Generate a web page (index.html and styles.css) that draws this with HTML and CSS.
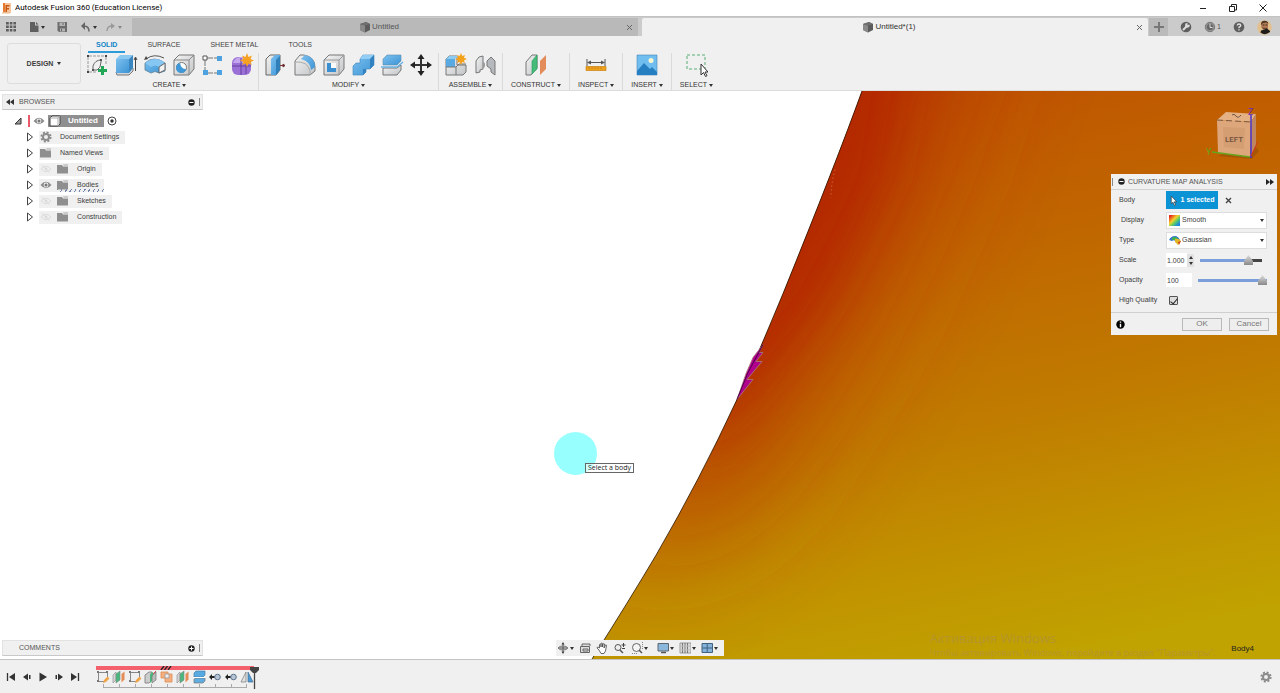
FILE: index.html
```html
<!DOCTYPE html>
<html lang="en">
<head>
<meta charset="utf-8">
<title>Autodesk Fusion 360 (Education License)</title>
<link rel="stylesheet" href="styles.css">
</head>
<body>
<svg class="defs" aria-hidden="true">
  <defs>
    <linearGradient id="blueFace" x1="0" y1="0" x2="1" y2="1"><stop offset="0" stop-color="#7cc0ee"/><stop offset="1" stop-color="#3d94d6"/></linearGradient>
    <linearGradient id="greyFace" x1="0" y1="0" x2="1" y2="1"><stop offset="0" stop-color="#f4f4f4"/><stop offset="1" stop-color="#c2c4c6"/></linearGradient>
    <symbol id="folder" viewBox="0 0 12 10"><path d="M0 1h5l1 1.500h5v7H0z" fill="#8f8f8f"/><path d="M6 0.500h5v1H6.600z" fill="#a8a8a8"/></symbol>
    <symbol id="eye" viewBox="0 0 12 8"><path d="M0.500 4Q6-2.500 11.500 4Q6 10.500 0.500 4z" fill="#8a8a8a"/><circle cx="6" cy="4" r="2.400" fill="#eee"/><circle cx="6" cy="4" r="1.500" fill="#777"/></symbol>
    <symbol id="eyeoff" viewBox="0 0 12 8"><path d="M1 4Q6-1.500 11 4Q6 9.500 1 4zM2 0.500l8 7" fill="none" stroke="#dcdcdc"/><circle cx="6" cy="4" r="1.500" fill="#dcdcdc"/></symbol>
    <symbol id="arrow" viewBox="0 0 8 10"><path d="M1.500 1l5 4-5 4z" fill="#fff" stroke="#444"/></symbol>
    <symbol id="gear" viewBox="0 0 12 12"><circle cx="6" cy="6" r="4.600" fill="none" stroke="#8c8c8c" stroke-width="2" stroke-dasharray="2 1.610"/><circle cx="6" cy="6" r="3" fill="none" stroke="#8c8c8c" stroke-width="2"/></symbol>
    <symbol id="cube" viewBox="0 0 12 12"><path d="M1 3l6-2 4 2v6l-5 2.500-5-2.500z" fill="#5c5c5c"/><path d="M1 3l5 1.500v7l-5-2.500z" fill="#8a8a8a"/><path d="M1 3l6-2 4 2-5 1.500z" fill="#707070"/></symbol>
    <symbol id="t-sketch" viewBox="0 0 14 14"><path d="M2.500 3v8M2 2.500h9.500M11.500 2v6M3 11.500h5" fill="none" stroke="#888"/><path d="M1 1h2v2H1zM10 1h2v2h-2zM1 10h2v2H1z" fill="#777"/><path d="M7 13l1-3 3.500-3.500 2 2L10 12z" fill="#f0a54a"/></symbol>
    <symbol id="t-plane" viewBox="0 0 14 14"><path d="M1 5l3-3v8l-3 3z" fill="#d5d5d5" stroke="#888" stroke-width=".6"/><path d="M4 4l4-3v9l-4 3z" fill="#49b87c" stroke="#888" stroke-width=".6"/><path d="M9.500 4l3-2.500v8l-3 3z" fill="#e58b55"/></symbol>
    <symbol id="t-plane2" viewBox="0 0 14 14"><path d="M1 5l4-3h3v8l-3 3H1z" fill="#ccc" stroke="#777" stroke-width=".8"/><path d="M6 4l3-2v8l-3 3z" fill="#49b87c"/><path d="M8 6l4-4v8l-4 3z" fill="#bbb" stroke="#777" stroke-width=".7"/><path d="M9 4l3-3" stroke="#d44"/></symbol>
    <symbol id="t-combine" viewBox="0 0 14 14"><path d="M1 2h7v2h4v8H5V8H1z" fill="#f4b080" stroke="#e08a4e" stroke-width=".8"/><path d="M5 4h4v4H5z" fill="#eee" stroke="#999" stroke-width=".8"/></symbol>
    <symbol id="t-split" viewBox="0 0 14 14"><path d="M2 3l2-2h9v4l-2 2H2z" fill="#57a9e2" stroke="#4a7fa5" stroke-width=".7"/><path d="M2 9l2-1h9v3l-2 2H2z" fill="#5fade0" stroke="#777" stroke-width=".7"/><path d="M1 7.500h12" stroke="#fff"/></symbol>
    <symbol id="t-move" viewBox="0 0 14 14"><path d="M1 7l3-3v6zM4 6h4v2H4z" fill="#222"/><circle cx="9.500" cy="7" r="2.800" fill="#b5c3d4" stroke="#5c738c"/></symbol>
    <symbol id="t-mirror" viewBox="0 0 14 14"><path d="M6 2v10H1z" fill="#e2e2e2" stroke="#777" stroke-width=".7"/><path d="M8 2v10h5z" fill="#4c9bd4" stroke="#466f93" stroke-width=".7"/></symbol>
  </defs>
</svg>

<header class="titlebar">
  <svg class="logo" viewBox="0 0 10 11"><path d="M1 0h8v10H1z" fill="#f7c49c"/><path d="M1 0h2v9H1z" fill="#e8792b"/><path d="M3.500 2h4v1.500H5V5h2v1.400H5V9H3.500z" fill="#c55612"/><path d="M0 10h8" stroke="#e9b58c"/></svg>
  <h1 class="title">Autodesk Fusion 360 (Education License)</h1>
  <div class="window-controls">
    <button aria-label="Minimize"><svg viewBox="0 0 10 10"><path d="M2 5.500h6" stroke="#222"/></svg></button>
    <button aria-label="Restore"><svg viewBox="0 0 10 10"><path d="M1.500 3.500h5v5h-5zM3.500 3V1.500h5V7H7" fill="none" stroke="#222"/></svg></button>
    <button aria-label="Close"><svg viewBox="0 0 10 10"><path d="M1.500 1.500l7 7M8.500 1.500l-7 7" stroke="#222"/></svg></button>
  </div>
</header>

<div class="tabbar">
  <div class="quick">
    <button aria-label="Data panel"><svg width="12" height="12" viewBox="0 0 12 12"><path d="M1 1h2.800v2.500H1zM4.800 1h2.600v2.500H4.800zM8.400 1H11v2.500H8.400zM1 4.500h2.800V7H1zM4.800 4.500h2.600V7H4.800zM8.400 4.500H11V7H8.400zM1 8h2.800v2.500H1zM4.800 8h2.600v2.500H4.800zM8.400 8H11v2.500H8.400z" fill="#5f5f5f"/></svg></button>
    <button aria-label="File"><svg width="10" height="12" viewBox="0 0 10 12"><path d="M1 1h5v3.500h3.500V11H1z" fill="#5f5f5f"/><path d="M7 1l2.500 2.500H7z" fill="#5f5f5f"/></svg><i class="caret"></i></button>
    <button aria-label="Save"><svg width="11" height="12" viewBox="0 0 11 12"><path d="M0.500 1h9.500v10H2l-1.500-1.500z" fill="#6d6d6d"/><path d="M2.500 1.500h5.500v3.500H2.500zM3 7.500h5v3H3z" fill="#b5b5b5"/><path d="M6 2v2M4.500 8v2" stroke="#666"/></svg></button>
    <button aria-label="Undo"><svg width="11" height="12" viewBox="0 0 11 12"><path d="M1 5l4-4v8z" fill="#666"/><path d="M4 5q5 0 5 5.500" fill="none" stroke="#666" stroke-width="1.500"/></svg><i class="caret"></i></button>
    <button class="dim" aria-label="Redo"><svg width="11" height="12" viewBox="0 0 11 12"><path d="M10 5L6 2v6z" fill="#999"/><path d="M7 5q-5 0-5 5" fill="none" stroke="#999" stroke-width="1.300"/></svg><i class="caret"></i></button>
  </div>
  <nav class="doc-tabs" aria-label="Documents">
    <div class="doc-tab"><button class="doc-name"><svg width="12" height="12"><use href="#cube"/></svg>Untitled</button><button class="doc-close" aria-label="Close Untitled"><svg width="7" height="7" viewBox="0 0 7 7"><path d="M1 1l5 5M6 1L1 6" stroke="#666"/></svg></button></div>
    <div class="doc-tab active"><button class="doc-name"><svg width="12" height="12"><use href="#cube"/></svg>Untitled*(1)</button><button class="doc-close" aria-label="Close Untitled*(1)"><svg width="7" height="7" viewBox="0 0 7 7"><path d="M1 1l5 5M6 1L1 6" stroke="#666"/></svg></button></div>
  </nav>
  <div class="account">
    <button class="add" aria-label="New design"><svg width="10" height="10" viewBox="0 0 10 10"><path d="M5 0v10M0 5h10" stroke="#777" stroke-width="2"/></svg></button>
    <button aria-label="Extensions"><svg width="12" height="12" viewBox="0 0 12 12"><circle cx="6" cy="6" r="5.300" fill="#5f5f5f"/><path d="M3 9l4-4" stroke="#ddd" stroke-width="2"/><path d="M9.500 3.500A2.300 2.300 0 1 1 7.500 2v2z" fill="#ddd"/></svg></button>
    <button aria-label="Job status"><svg width="12" height="12" viewBox="0 0 12 12"><circle cx="6" cy="6" r="4.700" fill="#666" stroke="#777"/><circle cx="6" cy="6" r="3.800" fill="none" stroke="#bbb" stroke-width=".6"/><path d="M6 3v3.500h2.500" fill="none" stroke="#ddd"/></svg><span>1</span></button>
    <button aria-label="Help"><svg width="12" height="12" viewBox="0 0 12 12"><circle cx="6" cy="6" r="5.300" fill="#5f5f5f"/><path d="M4.200 4.500Q4.400 3 6 3T7.800 4.600Q7.800 5.500 6 6.200V7.300M6 8.300v1.300" fill="none" stroke="#e4e4e4" stroke-width="1.300"/></svg></button>
    <button aria-label="Profile"><svg width="15" height="15" viewBox="0 0 15 15"><circle cx="7.500" cy="7.500" r="7.300" fill="#e2c08d"/><path d="M4 4.500q0-3.500 3.500-3.500t3.500 3.500v4.500H8L4.500 8z" fill="#b27a55"/><path d="M4 5Q4 0.800 7.500 .8T11.300 4L9.500 2.500 6 3z" fill="#4a3428"/><path d="M5 7.500l5 .5v1.500H6z" fill="#6b4632"/><path d="M6 10l4-1.500 3 2.500v1q-5 4-9.500.5l.5-2z" fill="#1f1d1c"/><path d="M5.500 5h2M8.500 5h2" stroke="#432"/></svg></button>
  </div>
</div>

<div class="ribbon">
  <button class="workspace">DESIGN<i class="caret"></i></button>
  <div class="tools">
    <nav class="ribbon-tabs" aria-label="Toolbar tabs">
      <button class="current">SOLID</button><button>SURFACE</button><button>SHEET METAL</button><button>TOOLS</button>
    </nav>
    <div class="groups">
      <section class="group first">
        <div class="icons">
          <button aria-label="Create sketch"><svg viewBox="0 0 24 24"><path d="M4 3h16M3 4v14M4 19h8M21 4v8" fill="none" stroke="#999" stroke-dasharray="3 1"/><path d="M2 2h2v2H2zM20 2h2v2h-2zM2 18h2v2H2z" fill="#444"/><path d="M8 17V13q2-6 8-6v2q0 6-4 8z" fill="none" stroke="#666"/><path d="M7 16h2v2H7zM15 6h2v2h-2z" fill="#555"/><path d="M17.500 13v9M13 17.500h9" stroke="#23a757" stroke-width="3"/></svg></button>
          <button aria-label="Extrude"><svg viewBox="0 0 24 24"><path d="M2 19l1 3h12l4-4v-3" fill="#d3d6d9" stroke="#777"/><path d="M2 6h13v14H2z" fill="url(#blueFace)"/><path d="M2 6l4-4h13l-4 4z" fill="#8bc9f1"/><path d="M15 6l4-4v13l-4 5z" fill="#3a86c1"/><path d="M21.500 5v13M20 7l1.500-3L23 7" fill="none" stroke="#444"/></svg></button>
          <button aria-label="Revolve"><svg viewBox="0 0 24 24"><path d="M2 10q9-8 20 0v8l-6 2q-4-3-8 0l-6-3z" fill="url(#blueFace)" stroke="#5a7d98" stroke-width=".8"/><path d="M2 10l6 4q4-3 8 0l6-4q-9-8-20 0z" fill="#85c6f2"/><path d="M16 14l6-4v7l-6 3z" fill="#f2f2f2" stroke="#666"/><path d="M3 6q8-6 18-1" fill="none" stroke="#555"/><path d="M1 7l2-4 2 3z" fill="#444"/></svg></button>
          <button aria-label="Hole"><svg viewBox="0 0 24 24"><path d="M2 7l5-5h15v14l-5 6H2z" fill="url(#greyFace)" stroke="#777"/><path d="M2 7h15v15M17 7l5-5" fill="none" stroke="#888"/><circle cx="9.500" cy="14.500" r="5" fill="#fff" stroke="#777"/><path d="M8 10a5 5 0 1 0 6 6q-5 0-6-6z" fill="#3f98d8"/></svg></button>
          <button aria-label="Pattern"><svg viewBox="0 0 24 24"><path d="M4 5h15M4 5v15M4 20h15" stroke="#777" fill="none" stroke-dasharray="8 1"/><path d="M2 3h4v4H2z" fill="#fff" stroke="#555"/><path d="M16 3h5v5h-5zM2 17h5v5H2zM16 17h5v5h-5z" fill="#4da2df"/></svg></button>
          <button aria-label="Create form"><svg viewBox="0 0 24 24"><rect x="2" y="4" width="19" height="18" rx="6" fill="#9a70d6"/><path d="M3 10q2-6 8-6h6l-3 6z" fill="#c4a6ee"/><path d="M2 13h19M11 5v17M16 7v14" stroke="#65419f" fill="none"/><path d="M17 0l1.500 4L22 2.500 20.500 6 24 7.500 20.500 9 22 12l-3.500-1.500L17 14l-1.500-3.500L12 12l1.500-3L10 7.500 13.500 6 12 2.500 15.500 4z" fill="#f6a220"/></svg></button>
        </div>
        <button class="group-name">CREATE<i class="caret"></i></button>
      </section>
      <section class="group">
        <div class="icons">
          <button aria-label="Press pull"><svg viewBox="0 0 24 24"><path d="M2 6l4-4h10v15l-4 5H2z" fill="url(#greyFace)" stroke="#666"/><path d="M7 6l4-4h5v15l-4 5H7z" fill="url(#blueFace)"/><path d="M12 7l4-4v14l-4 5z" fill="#307fb9"/><path d="M16 12.500h3M19 11l2 1.500-2 1.500z" stroke="#733" fill="#433"/></svg></button>
          <button aria-label="Fillet"><svg viewBox="0 0 24 24"><path d="M2 21V8l5-6h4q11 2 11 12v4l-5 4H2z" fill="url(#greyFace)" stroke="#777"/><path d="M12 2q10 2 10 12l-4 3Q18 9 8 6z" fill="url(#blueFace)"/><path d="M2 9q13-1 15 9v4" fill="none" stroke="#aaa"/></svg></button>
          <button aria-label="Shell"><svg viewBox="0 0 24 24"><path d="M2 7l5-5h15v14l-5 6H2z" fill="url(#greyFace)" stroke="#777"/><path d="M2 7h15v15M17 7l5-5" fill="none" stroke="#999"/><path d="M5 10h9v9H5z" fill="#3a8fd0"/><path d="M9 10h5v5H9z" fill="#fafafa"/></svg></button>
          <button aria-label="Combine"><svg viewBox="0 0 24 24"><path d="M2 13l3-3h4V6l3-4h11v10l-4 4h-4v3l-3 3H2z" fill="url(#blueFace)" stroke="#3e87bd" stroke-width=".6"/><path d="M9 6l3-4h11l-4 4z" fill="#91cdf4"/><path d="M19 6l4-4v10l-4 4zM12 16h3v3l-3 3z" fill="#3382c0"/></svg></button>
          <button aria-label="Split body"><svg viewBox="0 0 24 24"><path d="M3 6l4-4h14v6l-4 4H3z" fill="url(#blueFace)" stroke="#5d8fae" stroke-width=".6"/><path d="M3 15h14l4-3v5l-4 5H3z" fill="url(#greyFace)" stroke="#777"/><path d="M1 14h16l6-5" fill="none" stroke="#69b2e4" stroke-width="1.500"/></svg></button>
          <button aria-label="Move"><svg viewBox="0 0 24 24"><path d="M12 4v16M4 12h16" stroke="#333" stroke-width="2"/><path d="M12 1l3.500 5h-7zM12 23l3.500-5h-7zM1 12l5-3.500v7zM23 12l-5-3.500v7z" fill="#222"/></svg></button>
        </div>
        <button class="group-name">MODIFY<i class="caret"></i></button>
      </section>
      <section class="group">
        <div class="icons">
          <button aria-label="New component"><svg viewBox="0 0 24 24"><path d="M2 6l3-3h8v9h9v7l-3 3H2z" fill="url(#greyFace)" stroke="#777"/><path d="M2 6h9v8H2z" fill="#59aae3"/><path d="M2 6l3-3h9l-3 3z" fill="#8ccbf2"/><path d="M2 14h10l3-3h7M12 14v8" fill="none" stroke="#777"/><path d="M17 0l1.300 3L21 2l-1 2.700L23 6l-3 1.300 1 2.700-2.700-1L17 12l-1.300-3L13 10l1-2.700L11 6l3-1.300L13 2l2.700 1z" fill="#f5a21b"/></svg></button>
          <button aria-label="Joint"><svg viewBox="0 0 24 24"><path d="M3 20V8l3-4 4-1v13l-3 1v2z" fill="url(#greyFace)" stroke="#777"/><path d="M10 9q2 0 2 3t-2 3z" fill="#999"/><path d="M14 8l4-4 4 4v14l-4-3v-3l-4-3z" fill="#b5b9bd" stroke="#777"/></svg></button>
        </div>
        <button class="group-name">ASSEMBLE<i class="caret"></i></button>
      </section>
      <section class="group single">
        <div class="icons"><button aria-label="Construct plane"><svg viewBox="0 0 24 24"><path d="M2 9l6-7h5v13l-6 7H2z" fill="url(#greyFace)" stroke="#777"/><path d="M8 8l5-6v14l-5 5z" fill="#46bb79" stroke="#269d5a" stroke-width=".6"/><path d="M16 8l6-6v14l-6 6z" fill="#e38c59"/></svg></button></div>
        <button class="group-name">CONSTRUCT<i class="caret"></i></button>
      </section>
      <section class="group single">
        <div class="icons"><button aria-label="Measure"><svg viewBox="0 0 24 24"><path d="M3 6v7M21 6v7M4 9.500h16" stroke="#555"/><path d="M3 9.500l4-2v4zM21 9.500l-4-2v4z" fill="#555"/><path d="M2 13.500h20v4H2z" fill="#eea11c" stroke="#cc8210" stroke-width=".7"/><path d="M5 14v2M8 14v2M11 14v2M14 14v2M17 14v2" stroke="#b77411" stroke-width=".6"/></svg></button></div>
        <button class="group-name">INSPECT<i class="caret"></i></button>
      </section>
      <section class="group single">
        <div class="icons"><button aria-label="Insert image"><svg viewBox="0 0 24 24"><path d="M2 2h20v20H2z" fill="#70bdf0" stroke="#4588b8" stroke-width=".6"/><circle cx="16" cy="7.500" r="2.500" fill="#fbf6cf"/><path d="M2 18l7-8 6 6 2-2 5 5v3H2z" fill="#257fc0"/></svg></button></div>
        <button class="group-name">INSERT<i class="caret"></i></button>
      </section>
      <section class="group single last">
        <div class="icons"><button aria-label="Select"><svg viewBox="0 0 24 24"><path d="M3 2h18v14H3z" fill="none" stroke="#58ad75" stroke-dasharray="3 2"/><path d="M17 11v11l2.500-2.500 2 4 1.500-.8-2-3.700h3z" fill="#fff" stroke="#333"/></svg></button></div>
        <button class="group-name">SELECT<i class="caret"></i></button>
      </section>
    </div>
  </div>
</div>

<main class="viewport">
  <svg class="scene" viewBox="0 91 1280 569" preserveAspectRatio="none">
    <defs>
      <linearGradient id="surface" gradientUnits="userSpaceOnUse" x1="950" y1="60" x2="1080" y2="650">
        <stop offset="0" stop-color="#bf5200"/><stop offset=".3" stop-color="#c06500"/><stop offset=".6" stop-color="#c07c00"/><stop offset=".82" stop-color="#c19300"/><stop offset="1" stop-color="#c0a200"/>
      </linearGradient>
      <filter id="wide" filterUnits="userSpaceOnUse" x="300" y="-200" width="1100" height="1000"><feGaussianBlur stdDeviation="62"/></filter>
      <filter id="narrow" filterUnits="userSpaceOnUse" x="300" y="-200" width="1100" height="1000"><feGaussianBlur stdDeviation="25"/></filter>
      <clipPath id="body"><path d="M862 91Q836 163 783 294Q762 346 737 400Q700 480 656 556Q630 600 592 660H1280V91z"/></clipPath>
    </defs>
    <g clip-path="url(#body)">
      <path d="M590 91h690v569H590z" fill="url(#surface)"/>
      <path d="M780-60H1000L920 180L850 330L740 500L620 560L640 380z" fill="#b53000" filter="url(#wide)" opacity=".85"/>
      <path d="M790 0H915L885 180L825 300L760 380L700 440L700 320z" fill="#b32200" filter="url(#narrow)" opacity=".7"/>
    </g>
    <path d="M862 91Q836 163 783 294Q762 346 737 400Q700 480 656 556Q630 600 592 660" fill="none" stroke="#2a1400" stroke-width=".8"/>
    <path d="M835 170q-4 14-4 28" fill="none" stroke="#cf7a54" stroke-dasharray="1 3"/>
    <path d="M763 345L753 358L746 374L737 400L753 380L747 380L762 362L756 362L763 353L759 353z" fill="#b0008c" stroke="#a58378" stroke-width=".8"/>
    <path d="M763 345L748 373L737 400" fill="none" stroke="#4d004c"/>
  </svg>

  <aside class="browser">
    <div class="palette-head"><svg width="8" height="6" viewBox="0 0 8 6"><path d="M4 0v6L0 3zM8 0v6L4 3z" fill="#333"/></svg><span>BROWSER</span><button aria-label="Collapse browser"><svg width="7" height="7" viewBox="0 0 7 7"><circle cx="3.500" cy="3.500" r="3.200" fill="#222"/><path d="M1.500 3.500h4" stroke="#fff"/></svg></button><i class="grip"></i></div>
    <ul class="tree">
      <li class="root"><svg width="8" height="8" viewBox="0 0 8 8"><path d="M7 1v6H1z" fill="#999" stroke="#333"/></svg><i class="mark"></i><svg class="eye" width="12" height="8"><use href="#eye"/></svg><span class="root-name"><svg width="12" height="12" viewBox="0 0 12 12"><path d="M1 3l2-2h8v8l-2 2H1z" fill="#fff" stroke="#444"/><path d="M1 3h8v8M9 3l2-2" fill="none" stroke="#aaa"/></svg>Untitled</span><svg width="10" height="10" viewBox="0 0 10 10"><circle cx="5" cy="5" r="4" fill="#fff" stroke="#444"/><circle cx="5" cy="5" r="1.700" fill="#333"/></svg></li>
      <li><svg width="8" height="10"><use href="#arrow"/></svg><div class="node"><svg width="12" height="12"><use href="#gear"/></svg><span>Document Settings</span></div></li>
      <li><svg width="8" height="10"><use href="#arrow"/></svg><div class="node"><svg width="12" height="10"><use href="#folder"/></svg><span>Named Views</span></div></li>
      <li><svg width="8" height="10"><use href="#arrow"/></svg><div class="node"><svg width="12" height="8"><use href="#eyeoff"/></svg><svg width="12" height="10"><use href="#folder"/></svg><span>Origin</span></div></li>
      <li><svg width="8" height="10"><use href="#arrow"/></svg><div class="node"><svg width="12" height="8"><use href="#eye"/></svg><div class="hatched"><svg width="12" height="10"><use href="#folder"/></svg><span>Bodies</span></div></div></li>
      <li><svg width="8" height="10"><use href="#arrow"/></svg><div class="node"><svg width="12" height="8"><use href="#eyeoff"/></svg><svg width="12" height="10"><use href="#folder"/></svg><span>Sketches</span></div></li>
      <li><svg width="8" height="10"><use href="#arrow"/></svg><div class="node"><svg width="12" height="8"><use href="#eyeoff"/></svg><svg width="12" height="10"><use href="#folder"/></svg><span>Construction</span></div></li>
    </ul>
  </aside>

  <svg class="viewcube" width="56" height="56" viewBox="0 0 56 56">
    <path d="M13 50l34 3 7-8-6-8z" fill="#8c4a0c" opacity=".5"/>
    <path d="M12 14L21 6 51 8 46 16z" fill="#e5b184"/><path d="M12 14l34 2-1 35-32-4z" fill="#dea77b"/><path d="M46 16l5-8v32l-6 11z" fill="#bd8560"/>
    <path d="M18 21l22 1-1 21-20-2z" fill="#d49d72"/>
    <path d="M12 14l34 2" stroke="#79583f" stroke-dasharray="6 3"/><path d="M27 9q2-2 4 1t5-1" fill="none" stroke="#6d5340"/>
    <path d="M46 52V9" stroke="#4a35c8" stroke-width="1.500"/><path d="M45 51L7 46" stroke="#63a51c" stroke-width="1.500"/><path d="M46 50l7-15" stroke="#d33a1d"/>
    <text class="cube-face" x="20" y="36">LEFT</text><text class="axis-z" x="43" y="9">Z</text><text class="axis-y" x="1" y="49">Y</text>
  </svg>

  <form class="dialog">
    <div class="dialog-head"><i class="grip"></i><svg width="7" height="7" viewBox="0 0 7 7"><circle cx="3.500" cy="3.500" r="3.200" fill="#222"/><path d="M1.500 3.500h4" stroke="#fff"/></svg><h2>CURVATURE MAP ANALYSIS</h2><svg width="8" height="6" viewBox="0 0 8 6"><path d="M0 0l4 3-4 3zM4 0l4 3-4 3z" fill="#222"/></svg></div>
    <div class="fields">
      <span class="label">Body</span>
      <div class="field"><button type="button" class="picked"><svg width="8" height="11" viewBox="0 0 7 10"><path d="M1 1v7l1.500-1.500L4 9.500l1-.5-1.300-2.800H6z" fill="#fff" stroke="#333" stroke-width=".6"/></svg>1 selected</button><button type="button" class="clear" aria-label="Clear selection"><svg width="7" height="7" viewBox="0 0 7 7"><path d="M1 1l5 5M6 1L1 6" stroke="#444" stroke-width="1.400"/></svg></button></div>
      <label for="display" class="inset">Display</label>
      <div class="field choice"><select id="display"><option>Smooth</option></select><i class="swatch"></i><i class="caret"></i></div>
      <label for="type">Type</label>
      <div class="field choice"><select id="type"><option>Gaussian</option></select><svg class="swatch-icon" width="12" height="9" viewBox="0 0 12 9"><path d="M0 4q2-4 6-4 3 0 5 4l-3 3Q6 3 3 5z" fill="#3474c9"/><path d="M3 2q4-3 7 2L8 6Q6 3 3 4z" fill="#43b649"/><path d="M6 3q4-1 6 2L9 9 6 6z" fill="#e2b72a"/><path d="M9 6l3-1-2 4z" fill="#d33c20"/></svg><i class="caret"></i></div>
      <label for="scale">Scale</label>
      <div class="field"><input class="num" id="scale" value="1.000"><span class="spin"><i class="up"></i><i class="caret"></i></span><input class="slider partial" type="range" min="0" max="100" value="83" aria-label="Scale slider"></div>
      <label for="opacity">Opacity</label>
      <div class="field"><input class="num wide" id="opacity" value="100"><input class="slider" type="range" min="0" max="100" value="100" aria-label="Opacity slider"></div>
      <label for="quality">High Quality</label>
      <div class="field"><input type="checkbox" id="quality" checked></div>
    </div>
    <div class="dialog-foot"><svg width="9" height="9" viewBox="0 0 9 9"><circle cx="4.500" cy="4.500" r="4.200" fill="#000"/><path d="M4.500 1.500v1.300M4.500 3.800v3.400" stroke="#fff" stroke-width="1.400"/></svg><button type="button">OK</button><button type="button">Cancel</button></div>
  </form>

  <div class="pointer-halo"></div>
  <div class="tooltip">Select a body</div>
  <div class="watermark"><strong>Активация Windows</strong><span>Чтобы активировать Windows, перейдите в раздел "Параметры".</span></div>
  <div class="body-label">Body4</div>

  <div class="comments palette-head"><span>COMMENTS</span><button aria-label="Add comment"><svg width="7" height="7" viewBox="0 0 7 7"><circle cx="3.500" cy="3.500" r="3.200" fill="#222"/><path d="M1.500 3.500h4M3.500 1.500v4" stroke="#fff"/></svg></button><i class="grip"></i></div>

  <div class="navbar">
    <button aria-label="Orbit"><svg width="12" height="12" viewBox="0 0 12 12"><path d="M6 1v10M1 6h10" stroke="#444"/><ellipse cx="6" cy="6" rx="4.500" ry="2" fill="none" stroke="#777"/><path d="M6 0l1.500 2.500h-3zM6 12l1.500-2.500h-3z" fill="#444"/></svg><i class="caret"></i></button>
    <button aria-label="Look at"><svg width="12" height="12" viewBox="0 0 12 12"><path d="M1.500 4.500h9v6h-9zM3 4V2h8v2M4 7h5v2H4z" fill="#ddd" stroke="#666"/></svg></button>
    <button aria-label="Pan"><svg width="12" height="12" viewBox="0 0 12 12"><path d="M3 8L1 6q0-1 1-1l1.500 1V2.500q1-1 1.500 0V5 1.500q1-1 1.500 0V5l.5-3q1-1 1.500 0L8 6l1.500-3q1-.500 1 .500L9.500 9 8 11.500H5z" fill="#fff" stroke="#444" stroke-width=".8"/></svg></button>
    <button aria-label="Zoom"><svg width="13" height="12" viewBox="0 0 13 12"><circle cx="5" cy="5.500" r="3" fill="#eee" stroke="#555"/><path d="M7 8l3 3" stroke="#555" stroke-width="1.500"/><path d="M10.500 1v4M8.500 3h4M9 6.500h3" stroke="#444"/></svg></button>
    <button aria-label="Fit"><svg width="12" height="12" viewBox="0 0 12 12"><circle cx="5.500" cy="5.500" r="4" fill="#f5f5f5" stroke="#666"/><path d="M8 8l3 3" stroke="#555" stroke-width="1.500"/><path d="M11.500 0v8M1 11.500h6" stroke="#888" stroke-dasharray="1 1"/></svg><i class="caret"></i></button>
    <button class="spaced" aria-label="Display settings"><svg width="12" height="12" viewBox="0 0 12 12"><path d="M1 1.500h10.500V9H1z" fill="#8bb7dd" stroke="#5a6772"/><path d="M4 10.500h5" stroke="#555" stroke-width="1.500"/></svg><i class="caret"></i></button>
    <button aria-label="Grid"><svg width="12" height="12" viewBox="0 0 12 12"><path d="M1 1h11v10H1z" fill="#ddd" stroke="#999"/><path d="M3.500 1v10M6 1v10M8.500 1v10" stroke="#777"/><path d="M1 4h11M1 8h11" stroke="#bbb"/></svg><i class="caret"></i></button>
    <button aria-label="Viewports"><svg width="12" height="12" viewBox="0 0 12 12"><path d="M1 1.500h10.500v9H1zM1 6h10.500M6.200 1.500v9" fill="#84b2db" stroke="#41617e"/></svg><i class="caret"></i></button>
  </div>
</main>

<footer class="timeline">
  <div class="playback">
    <button aria-label="First"><svg viewBox="0 0 10 10"><path d="M1.500 1v8" stroke="#333" stroke-width="1.300"/><path d="M9 1v8L3 5z" fill="#333"/></svg></button>
    <button aria-label="Step back"><svg viewBox="0 0 10 10"><path d="M6 1.500v7L1 5zM7 3h1.500v4H7z" fill="#333"/></svg></button>
    <button aria-label="Play"><svg viewBox="0 0 10 10"><path d="M1.500 0.500v9L9 5z" fill="#333"/></svg></button>
    <button aria-label="Step forward"><svg viewBox="0 0 10 10"><path d="M4 1.500v7L9 5zM1.500 3H3v4H1.500z" fill="#333"/></svg></button>
    <button aria-label="Last"><svg viewBox="0 0 10 10"><path d="M8.500 1v8" stroke="#333" stroke-width="1.300"/><path d="M1 1v8l6-4z" fill="#333"/></svg></button>
  </div>
  <div class="history">
    <div class="span"><svg width="12" height="4" viewBox="0 0 12 4"><path d="M1 4l3-4M4.500 4l3-4M8 4l3-4" stroke="#222" stroke-width="1.300"/></svg></div>
    <div class="features">
      <button aria-label="Sketch 1"><svg><use href="#t-sketch"/></svg></button><button aria-label="Plane 1"><svg><use href="#t-plane"/></svg></button><button aria-label="Sketch 2"><svg><use href="#t-sketch"/></svg></button><button aria-label="Loft"><svg><use href="#t-plane2"/></svg></button><button aria-label="Combine"><svg><use href="#t-combine"/></svg></button><button aria-label="Plane 2"><svg><use href="#t-plane"/></svg></button><button aria-label="Split body"><svg><use href="#t-split"/></svg></button><button aria-label="Move 1"><svg><use href="#t-move"/></svg></button><button aria-label="Move 2"><svg><use href="#t-move"/></svg></button><button aria-label="Mirror"><svg><use href="#t-mirror"/></svg></button>
    </div>
    <div class="ticks"><i></i><i></i><i></i><i></i><i></i><i></i><i></i><i></i><i></i></div>
    <svg class="marker" width="9" height="24" viewBox="0 0 9 24"><path d="M0 1h9v3L6 7H3L0 4z" fill="#444"/><path d="M4.500 5v18" stroke="#444" stroke-width="1.300"/></svg>
  </div>
  <button class="settings" aria-label="Timeline settings"><svg width="12" height="12"><use href="#gear"/></svg></button>
</footer>
</body>
</html>
```
FILE: styles.css
```css
* { box-sizing: border-box; }
body {
  margin: 0;
  min-height: 100vh;
  display: flex;
  flex-direction: column;
  background: #f0f0f0;
  color: #3c3c3c;
  font: 7px/10px "Liberation Sans", Arial, sans-serif;
}
button, input, select { font: inherit; color: inherit; }
button {
  display: flex;
  align-items: center;
  justify-content: center;
  padding: 0;
  border: 0;
  background: none;
}
svg { flex: none; display: block; }
.defs { position: absolute; width: 0; height: 0; }
.caret {
  flex: none;
  border: 2px solid transparent;
  border-top: 3px solid #333;
  border-bottom: 0;
}

/* Title bar */
.titlebar { display: flex; align-items: center; height: 16px; padding: 0 12px 0 2px; background: #fff; }
.logo { width: 10px; height: 11px; }
.title { margin: 0 auto 0 3px; font: 8px/10px Roboto, sans-serif; color: #000; }
.window-controls { display: flex; gap: 20px; }
.window-controls svg { width: 10px; height: 10px; }

/* Document tabs */
.tabbar { display: grid; grid-template-columns: 132px minmax(0, 1fr) 132px; height: 20px; padding-top: 1px; background: #cbcbcb; border-top: 1px solid #c2c2c2; }
.quick { display: flex; align-items: center; gap: 12px; padding-left: 5px; }
.quick button { gap: 2px; }
.quick button:nth-child(n+4) { margin-right: -4px; }
.dim .caret { border-top-color: #888; }
.doc-tabs { display: flex; gap: 4px; min-width: 0; }
.doc-tab { flex: 1; display: flex; align-items: center; padding: 0 5px 0 0; background: #b9b9b9; }
.doc-tab.active { background: #f0f0f0; border-radius: 2px 2px 0 0; }
.doc-name { flex: 1; gap: 1px; font-size: 8px; color: #555; }
.active .doc-name { color: #333; }
.account { display: flex; align-items: center; justify-content: flex-end; gap: 12px; padding: 0 8px 0 1px; }
.account button { flex: none; gap: 1px; color: #555; }
.account .add { align-self: stretch; width: 19px; margin-right: auto; background: #bababa; }

/* Ribbon */
.ribbon { display: flex; align-items: flex-start; height: 55px; padding: 2px 7px 0; background: #f0f0f0; border-bottom: 1px solid #dcdcdc; }
.workspace { width: 74px; height: 41px; margin-top: 5px; gap: 4px; border: 1px solid #ddd; border-radius: 3px; font-weight: 700; }
.tools { flex: 1; }
.ribbon-tabs { display: flex; gap: 14px; padding-left: 7px; }
.ribbon-tabs button { height: 15px; padding: 0 8px; border-bottom: 2px solid transparent; color: #444; }
.ribbon-tabs .current { color: #0e85c9; border-bottom-color: #2d9bd8; font-weight: 700; }
.groups { display: flex; }
.group { display: flex; flex-direction: column; align-items: center; gap: 3px; padding: 0 5px; border-right: 1px solid #dadada; }
.group.first { padding: 0 4px; }
.group.single { padding: 0 8px; }
.group.last { border: 0; }
.icons { display: flex; gap: 5px; }
.icons svg { width: 24px; height: 24px; }
.group-name { gap: 2px; height: 10px; color: #333; }

/* Viewport and floating palettes */
.viewport { position: relative; flex: 1; min-height: 400px; overflow: hidden; background: #fff; }
.scene { position: absolute; inset: 0; width: 100%; height: 100%; }
.browser { position: absolute; top: 3px; left: 2px; width: 201px; }
.palette-head { display: flex; align-items: center; gap: 5px; height: 16px; padding: 0 1px 0 3px; background: #f0f0f0; border: 1px solid #e2e2e2; border-bottom-color: #c8c8c8; color: #555; }
.palette-head span { flex: 1; }
.palette-head .grip { margin-left: -1px; }
.grip { width: 2px; height: 8px; border: 1px solid #888; border-width: 0 0 0 1px; }
.tree { margin: 0; padding: 3px 0 0; list-style: none; }
.tree li { display: flex; align-items: center; gap: 5px; height: 16px; padding-left: 24px; }
.tree .root { gap: 3px; padding-left: 12px; }
.mark { width: 2px; height: 12px; margin-left: 3px; background: #e85a6a; }
.root-name { display: flex; align-items: center; gap: 7px; height: 12px; padding: 0 6px 0 1px; background: #8f8f8f; color: #fff; font-size: 8px; font-weight: 700; }
.node { display: flex; align-items: center; gap: 5px; height: 13px; padding: 0 6px 0 1px; background: #f0f0f0; }
.node span { margin-left: 3px; }
.hatched { display: flex; align-items: center; gap: 5px; height: 13px; padding-right: 6px; margin-right: -6px; background: repeating-linear-gradient(120deg, #7387ae 0 1px, transparent 1px 4px) bottom / 100% 3px no-repeat; }
.comments { position: absolute; bottom: 3px; left: 2px; width: 201px; padding-left: 16px; }
.viewcube { position: absolute; top: 15px; right: 19px; }
.cube-face { font: 500 8px Roboto, sans-serif; fill: #6f513d; }
.axis-z { font: 9px Roboto, sans-serif; fill: #6b2eb0; }
.axis-y { font: 9px Roboto, sans-serif; fill: #63a51c; }

/* Analysis dialog */
.dialog { position: absolute; top: 83px; right: 3px; width: 166px; background: #f0f0f0; }
.dialog-head { display: flex; align-items: center; gap: 3px; height: 16px; padding: 0 3px 0 1px; border-bottom: 1px solid #d2d2d2; }
.dialog-head h2 { flex: 1; margin: 0; font: inherit; color: #555; }
.dialog-head .grip { margin-right: 1px; }
.fields { display: grid; grid-template-columns: 47px minmax(0, 1fr); grid-auto-rows: 20px; align-items: center; padding: 0 10px 2px 8px; }
.inset { padding-left: 2px; }
.field { display: flex; align-items: center; position: relative; min-width: 0; }
.picked { width: 52px; height: 18px; gap: 3px; background: #0c93d6; color: #fff; font-weight: 700; white-space: nowrap; }
.clear { margin-left: 7px; }
.choice select { width: 100%; height: 17px; padding: 0 12px 0 15px; appearance: none; background: #fff; border: 1px solid #ddd; border-radius: 0; }
.choice .caret { position: absolute; right: 3px; }
.swatch { position: absolute; left: 3px; width: 11px; height: 11px; background: linear-gradient(135deg, #e32a1d 10%, #f5d22b 42%, #57cb67 62%, #1e89dc 85%); }
.swatch-icon { position: absolute; left: 3px; }
.num { flex: none; width: 21px; height: 14px; padding: 0 1px; border: 0; background: #fff; }
.num.wide { width: 26px; }
.spin { flex: none; display: flex; flex-direction: column; align-items: center; justify-content: space-between; width: 7px; height: 13px; padding: 2px 0; background: #e2e2e2; }
.up { border: 2px solid transparent; border-bottom: 3px solid #333; border-top: 0; }
.slider { flex: 1; min-width: 0; height: 12px; margin: 0 0 0 6px; appearance: none; background: linear-gradient(#7b9edb, #7b9edb) center / 100% 3px no-repeat; }
.slider.partial { margin-right: 5px; background-image: linear-gradient(90deg, #7b9edb 80%, #444 80%); }
.slider::-webkit-slider-thumb { appearance: none; width: 9px; height: 10px; background: linear-gradient(#ddd, #888); clip-path: polygon(50% 0, 100% 60%, 100% 100%, 0 100%, 0 60%); }
.fields [type="checkbox"] { appearance: none; width: 9px; height: 9px; margin: 0 0 0 3px; border: 1px solid #555; border-radius: 1px; background: #ddd; display: grid; place-items: center; }
.fields [type="checkbox"]::before { content: ""; width: 3px; height: 6px; border: solid #222; border-width: 0 1px 1px 0; transform: rotate(40deg); }
.dialog-foot { display: flex; align-items: center; gap: 7px; height: 23px; padding: 0 8px 0 5px; border-top: 1px solid #cfcfcf; }
.dialog-foot svg { margin-right: auto; }
.dialog-foot button { width: 40px; height: 13px; border: 1px solid #b9b9b9; background: #eee; color: #777; font-size: 8px; }

/* Things drawn over the canvas */
.pointer-halo { position: absolute; left: 43.300%; top: 341px; width: 43px; height: 43px; border-radius: 50%; background: #97fffd; }
.tooltip { position: absolute; left: 45.700%; top: 372px; padding: 0 2px; border: 1px solid #666; background: rgb(255 255 255 / 55%); color: #222; font: 7px/8px "Open Sans", sans-serif; }
.watermark { position: absolute; right: 64px; bottom: 0; display: flex; flex-direction: column; color: #b5952c; font: 9px/13px "Open Sans", sans-serif; }
.watermark strong { font-size: 13px; line-height: 16px; font-weight: 400; }
.body-label { position: absolute; right: 26px; bottom: 5px; font-size: 8px; color: #222; }
.navbar { position: absolute; left: 43.400%; bottom: 3px; display: flex; align-items: center; gap: 5px; height: 16px; padding: 0 6px 0 1px; background: #f0f0f0; }
.navbar button { gap: 1px; }
.navbar .spaced { margin-left: 4px; }

/* Timeline */
.timeline { display: flex; align-items: flex-start; height: 34px; padding: 6px 8px 0 6px; background: #f0f0f0; border-top: 1px solid #c4c4c4; }
.playback { display: flex; gap: 6px; margin-top: 6px; }
.playback svg { width: 10px; height: 10px; }
.history { position: relative; width: 158px; margin-left: 16px; }
.span { display: flex; justify-content: center; height: 4px; padding-right: 18px; background: #f4616d; }
.features { display: flex; gap: 2px; }
.features svg { width: 14px; height: 14px; }
.ticks { display: flex; width: 144px; margin-left: 7px; border-bottom: 1px solid #aaa; }
.ticks i { width: 16px; height: 3px; border-left: 1px solid #aaa; }
.ticks i:last-child { border-right: 1px solid #aaa; }
.marker { position: absolute; right: -5px; top: 0; }
.settings { margin: 5px 0 0 auto; }
```
